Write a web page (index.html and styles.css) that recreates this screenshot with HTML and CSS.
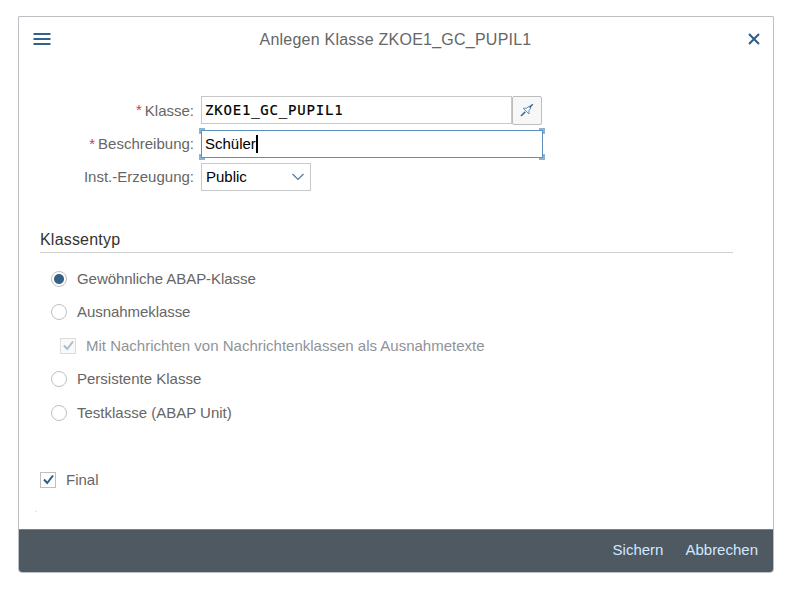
FILE: index.html
```html
<!DOCTYPE html>
<html lang="de">
<head>
<meta charset="utf-8">
<title>Anlegen Klasse</title>
<link rel="stylesheet" href="styles.css">
</head>
<body>
<main class="dialog">
  <header class="header">
    <svg class="menu" width="18" height="14" viewBox="0 0 18 14"><path d="M.5 2h17M.5 7h17M.5 12h17"/></svg>
    <h1 class="title">Anlegen Klasse ZKOE1_GC_PUPIL1</h1>
    <svg class="close" width="12" height="12" viewBox="0 0 12 12"><path d="M1 1l10 10M11 1L1 11"/></svg>
  </header>
  <section class="form">
    <div class="row">
      <span class="label"><i class="req">*</i><span class="t-klasse">Klasse:</span></span>
      <div class="input input-name"><span class="t-name">ZKOE1_GC_PUPIL1</span></div>
      <div class="pin"><svg width="14" height="14" viewBox="0 0 14 14"><path class="needle" d="M1 13L5.3 8.7"/><path class="head" d="M3.3 5.2L9 11V7.5L11 4.8L9.3 3.2L6.5 5.2Z"/><path class="needle" d="M9.5 4.6L12.7 1.3"/></svg></div>
    </div>
    <div class="row">
      <span class="label"><i class="req">*</i><span class="t-desc">Beschreibung:</span></span>
      <div class="input input-desc"><span class="t-value">Schüler</span><b class="caret"></b><i class="corner tl"></i><i class="corner tr"></i><i class="corner bl"></i><i class="corner br"></i></div>
    </div>
    <div class="row">
      <span class="label"><span class="t-inst">Inst.-Erzeugung:</span></span>
      <div class="input input-select"><span class="t-public">Public</span><svg width="12" height="8" viewBox="0 0 12 8"><path d="M.5 1L6 6.5L11.5 1"/></svg></div>
    </div>
  </section>
  <section class="types">
    <h2 class="group"><span class="t-group">Klassentyp</span></h2>
    <div class="option"><i class="radio on"></i><span class="t-o1">Gewöhnliche ABAP-Klasse</span></div>
    <div class="option"><i class="radio"></i><span class="t-o2">Ausnahmeklasse</span></div>
    <div class="option nested"><i class="check"><svg width="11" height="11" viewBox="0 0 11 11"><path d="M1 5.5L4.2 9L10 1.5"/></svg></i><span class="t-o3">Mit Nachrichten von Nachrichtenklassen als Ausnahmetexte</span></div>
    <div class="option"><i class="radio"></i><span class="t-o4">Persistente Klasse</span></div>
    <div class="option"><i class="radio"></i><span class="t-o5">Testklasse (ABAP Unit)</span></div>
  </section>
  <div class="option final"><i class="check"><svg width="11" height="11" viewBox="0 0 11 11"><path d="M1 5.5L4.2 9L10 1.5"/></svg></i><span class="t-final">Final</span></div>
  <i class="speck"></i>
  <footer class="footer">
    <span class="t-save">Sichern</span>
    <span class="t-cancel">Abbrechen</span>
  </footer>
</main>
</body>
</html>
```
FILE: styles.css
```css
* { box-sizing: border-box; }
body {
  margin: 0;
  padding: 16px 0 0 18px;
  background: #fff;
  color: #666;
  font: 15px/20px "Liberation Sans", Arial, sans-serif;
}
i { font-style: normal; }
svg { display: block; fill: none; }
.dialog {
  width: 756px;
  height: 557px;
  display: flex;
  flex-direction: column;
  border: 1px solid #bbbec2;
  border-radius: 1px 1px 4px 4px;
  background: #fff;
  overflow: hidden;
}
.header {
  height: 44px;
  padding: 0 13px 0 14px;
  display: flex;
  align-items: center;
  justify-content: space-between;
}
.menu { stroke: #346187; stroke-width: 2; }
.close { stroke: #2b5d88; stroke-width: 2; }
.title { margin: 2px 0 0 -8px; font-size: 16px; font-weight: 400; letter-spacing: .23px; }
.form { padding-top: 35px; }
.row { display: flex; height: 33.7px; }
.label {
  width: 175px;
  height: 28px;
  margin-right: 7px;
  display: flex;
  justify-content: flex-end;
  align-items: center;
}
.t-klasse { margin-top: 1px; }
.req { color: #d33a3a; margin-right: 3px; font-size: 15px; }
.input {
  position: relative;
  height: 28px;
  display: flex;
  align-items: center;
  border: 1px solid #c8c8c8;
  color: #000;
  padding-left: 4px;
}
.input-name { width: 311px; padding-left: 3px; font-family: "DejaVu Sans Mono", monospace; font-size: 14px; -webkit-text-stroke: .2px #000; }
.t-name { letter-spacing: .8px; }
.pin {
  width: 30px;
  height: 29px;
  border: 1px solid #bdbdbd;
  border-radius: 2px;
  background: #f7f7f7;
  display: flex;
  align-items: center;
  justify-content: center;
}
.pin svg { margin-bottom: 2px; }
.needle { stroke: #35658f; stroke-width: 1.5; }
.head { stroke: #5e92bd; stroke-width: 1; }
.input-desc { width: 342px; padding-left: 3px; border-color: #5b8fbd; }
.caret { width: 2px; height: 18px; background: #000; }
.corner { position: absolute; width: 6px; height: 6px; border: 0 solid #8db2d3; }
.tl { left: -3px; top: -3px; border-width: 2px 0 0 2px; }
.tr { right: -3px; top: -3px; border-width: 2px 2px 0 0; }
.bl { left: -3px; bottom: -3px; border-width: 0 0 2px 2px; }
.br { right: -3px; bottom: -3px; border-width: 0 2px 2px 0; }
.input-select { width: 110px; justify-content: space-between; padding-right: 6px; }
.input-select svg { stroke: #55799b; stroke-width: 1.2; }
.types { padding: 29.9px 40px 0 21px; }
.group {
  height: 26px;
  margin: 0 0 9px;
  padding-top: 3px;
  border-bottom: 1px solid #cfcfcf;
  color: #333;
  font-size: 16px;
  font-weight: 400;
}
.t-group { letter-spacing: .2px; }
.option { height: 33.5px; display: flex; align-items: center; padding-left: 11px; }
.radio {
  width: 16px;
  height: 16px;
  margin-right: 10px;
  border: 1px solid #bfbfc3;
  border-radius: 50%;
}
.on { background: radial-gradient(circle, #346187 4.5px, #fff 5.5px); }
.t-o1, .t-o2 { letter-spacing: -.06px; }
.check {
  width: 16px;
  height: 16px;
  margin-right: 10px;
  display: flex;
  align-items: center;
  justify-content: center;
  border: 1px solid #bfbfbf;
}
.check svg { stroke: #2b5d88; stroke-width: 2; }
.nested { padding-left: 20px; color: #8f9397; }
.nested .check { border-color: #dcdcdc; background: #f9f9f9; }
.nested .check svg { stroke: #a9bccd; }
.final { margin-top: 33.5px; padding-left: 21px; }
.speck { width: 2px; height: 1px; margin: 15px 0 0 16px; background: #e4e4e4; }
.footer {
  height: 43px;
  margin-top: auto;
  padding: 0 15px 2px;
  display: flex;
  align-items: center;
  justify-content: flex-end;
  gap: 22px;
  border-top: 1px solid #7b828a;
  background: #4f5962;
  color: #d1e8ff;
}
```
